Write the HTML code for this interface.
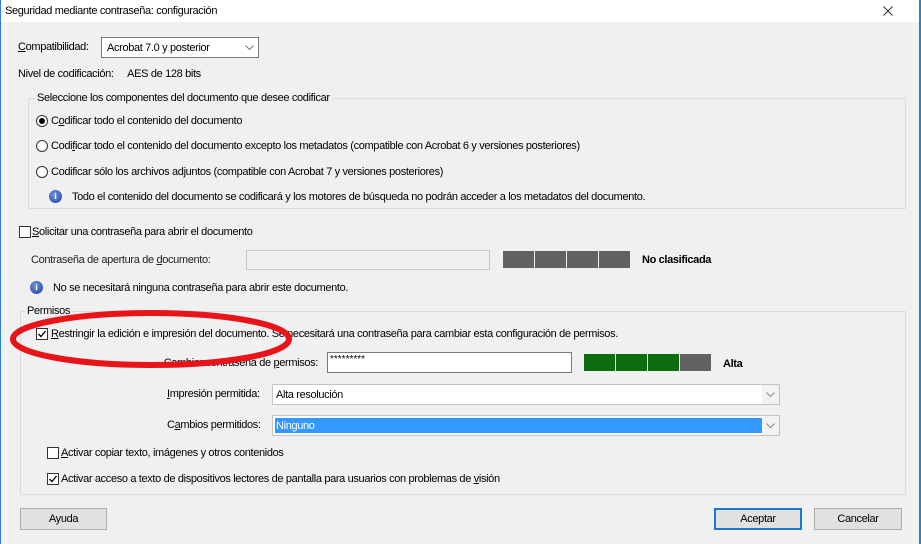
<!DOCTYPE html>
<html><head><meta charset="utf-8"><style>
*{margin:0;padding:0;box-sizing:border-box}
body{width:921px;height:544px;background:#f0f0f0;font-family:"Liberation Sans",sans-serif;font-size:11px;letter-spacing:-0.35px;color:#000;position:relative;overflow:hidden}
.a{position:absolute;white-space:nowrap}
.t{line-height:14px}
.box{position:absolute;background:#fff;border:1px solid #7a7a7a}
.sel{position:absolute;background:#fff;border:1px solid #c4c4c4}
.arr{position:absolute;right:0;top:0;bottom:0;width:17px;background:#f2f2f2}
.arr svg{position:absolute;left:4px;top:7px}
.grp{position:absolute;border:1px solid #dcdcdc}
.leg{position:absolute;background:#f0f0f0;padding:0 2px}
.rad{position:absolute;width:12px;height:12px;border:1px solid #333;border-radius:50%;background:#fff}
.chk{position:absolute;width:12px;height:12px;border:1px solid #333;background:#fff}
.info{position:absolute;width:13px;height:13px;border-radius:50%;background:radial-gradient(circle at 40% 35%,#6b8fd6,#1f45a8);color:#fff;font-weight:bold;font-size:9px;text-align:center;line-height:13px;font-family:"Liberation Serif",serif;letter-spacing:0}
.bar{position:absolute;width:31px;height:17px;background:#626262}
.g{background:#0e6b0e}
.btn{position:absolute;height:22px;background:#e1e1e1;border:1px solid #adadad;text-align:center;line-height:20px}
u{text-decoration:underline}
</style></head><body>
<div class="a" style="left:0;top:0;width:921px;height:22px;background:#fff"></div>
<div class="a" style="left:0;top:0;width:1px;height:544px;background:#2b7fd4"></div>
<div class="a" style="left:919px;top:0;width:2px;height:544px;background:#2b7fd4"></div>
<div class="a t" style="left:5px;top:4px">Seguridad mediante contraseña: configuración</div>
<svg class="a" style="left:883px;top:6px" width="10" height="10"><path d="M0.5 0.5L9.5 9.5M9.5 0.5L0.5 9.5" stroke="#333" stroke-width="1"/></svg>

<div class="a t" style="left:18px;top:40px"><u>C</u>ompatibilidad:</div>
<div class="sel" style="left:101px;top:37px;width:158px;height:21px;border-color:#7a7a7a"><span class="a t" style="left:5px;top:3px">Acrobat 7.0 y posterior</span><div class="arr" style="background:#fff"><svg width="9" height="5"><path d="M0.5 0.5L4.5 4.5L8.5 0.5" stroke="#777" fill="none"/></svg></div></div>
<div class="a t" style="left:18px;top:67px">Nivel de codificación:&nbsp;&nbsp;&nbsp;&nbsp;&nbsp;AES de 128 bits</div>

<div class="grp" style="left:28px;top:98px;width:878px;height:111px"></div>
<div class="leg t" style="left:35px;top:91px">Seleccione los componentes del documento que desee codificar</div>
<div class="rad" style="left:36px;top:115px"><div style="position:absolute;left:2px;top:2px;width:6px;height:6px;border-radius:50%;background:#000"></div></div>
<div class="a t" style="left:51px;top:114px">C<u>o</u>dificar todo el contenido del documento</div>
<div class="rad" style="left:36px;top:140px"></div>
<div class="a t" style="left:51px;top:139px">Codi<u>f</u>icar todo el contenido del documento excepto los metadatos (compatible con Acrobat 6 y versiones posteriores)</div>
<div class="rad" style="left:36px;top:166px"></div>
<div class="a t" style="left:51px;top:165px">Codificar sólo los archivos adjuntos (compatible con Acrobat 7 y versiones posteriores)</div>
<div class="info" style="left:49px;top:190px">i</div>
<div class="a t" style="left:72px;top:190px">Todo el contenido del documento se codificará y los motores de búsqueda no podrán acceder a los metadatos del documento.</div>

<div class="chk" style="left:19px;top:226px"></div>
<div class="a t" style="left:32px;top:225px"><u>S</u>olicitar una contraseña para abrir el documento</div>
<div class="a t" style="left:31px;top:253px;color:#222">Contraseña de apertura de <u>d</u>ocumento:</div>
<div class="box" style="left:246px;top:250px;width:244px;height:20px;background:#f0f0f0;border-color:#c8c8c8"></div>
<div class="bar" style="left:503px;top:251px"></div><div class="bar" style="left:535px;top:251px"></div><div class="bar" style="left:567px;top:251px"></div><div class="bar" style="left:599px;top:251px"></div>
<div class="a t" style="left:642px;top:253px;font-weight:bold">No clasificada</div>
<div class="info" style="left:30px;top:281px">i</div>
<div class="a t" style="left:53px;top:281px">No se necesitará ninguna contraseña para abrir este documento.</div>

<div class="grp" style="left:20px;top:311px;width:886px;height:184px"></div>
<div class="leg t" style="left:25px;top:304px">Permisos</div>
<div class="chk" style="left:36px;top:328px"><svg width="10" height="10" style="position:absolute;left:0;top:0"><path d="M1.5 5 L4 7.5 L8.5 2" stroke="#000" stroke-width="1.3" fill="none"/></svg></div>
<div class="a t" style="left:51px;top:327px"><u>R</u>estringir la edición e impresión del documento. Se necesitará una contraseña para cambiar esta configuración de permisos.</div>
<div class="a t" style="left:118px;top:356px;width:200px;text-align:right">Cambiar contraseña de <u>p</u>ermisos:</div>
<div class="box" style="left:327px;top:352px;width:245px;height:21px;border-color:#7a7a7a"><span class="a" style="left:2px;top:1px;font-size:10px;letter-spacing:0">*********</span></div>
<div class="bar g" style="left:584px;top:354px"></div><div class="bar g" style="left:616px;top:354px"></div><div class="bar g" style="left:648px;top:354px"></div><div class="bar" style="left:680px;top:354px"></div>
<div class="a t" style="left:723px;top:357px;font-weight:bold">Alta</div>
<div class="a t" style="left:167px;top:387px"><u>I</u>mpresión permitida:</div>
<div class="sel" style="left:272px;top:384px;width:508px;height:21px"><span class="a t" style="left:3px;top:3px">Alta resolución</span><div class="arr"><svg width="9" height="5"><path d="M0.5 0.5L4.5 4.5L8.5 0.5" stroke="#888" fill="none"/></svg></div></div>
<div class="a t" style="left:167px;top:418px">C<u>a</u>mbios permitidos:</div>
<div class="sel" style="left:272px;top:415px;width:508px;height:21px"><div class="a" style="left:2px;top:2px;width:487px;height:15px;background:#3399ff"></div><span class="a t" style="left:3px;top:3px;color:#fff">Ninguno</span><div class="arr"><svg width="9" height="5"><path d="M0.5 0.5L4.5 4.5L8.5 0.5" stroke="#888" fill="none"/></svg></div></div>
<div class="chk" style="left:47px;top:447px"></div>
<div class="a t" style="left:61px;top:446px"><u>A</u>ctivar copiar texto, imágenes y otros contenidos</div>
<div class="chk" style="left:47px;top:473px"><svg width="10" height="10" style="position:absolute;left:0;top:0"><path d="M1.5 5 L4 7.5 L8.5 2" stroke="#000" stroke-width="1.3" fill="none"/></svg></div>
<div class="a t" style="left:61px;top:472px">Activar acceso a texto de dispositivos lectores de pantalla para usuarios con problemas de <u>v</u>isión</div>

<div class="btn" style="left:20px;top:508px;width:87px">Ayuda</div>
<div class="btn" style="left:714px;top:508px;width:88px;border:2px solid #1a78d4;line-height:18px">Aceptar</div>
<div class="btn" style="left:814px;top:508px;width:88px">Cancelar</div>

<svg class="a" style="left:0;top:0" width="921" height="544"><ellipse cx="151" cy="339" rx="138" ry="26" fill="none" stroke="#e8141a" stroke-width="6"/></svg>
</body></html>
